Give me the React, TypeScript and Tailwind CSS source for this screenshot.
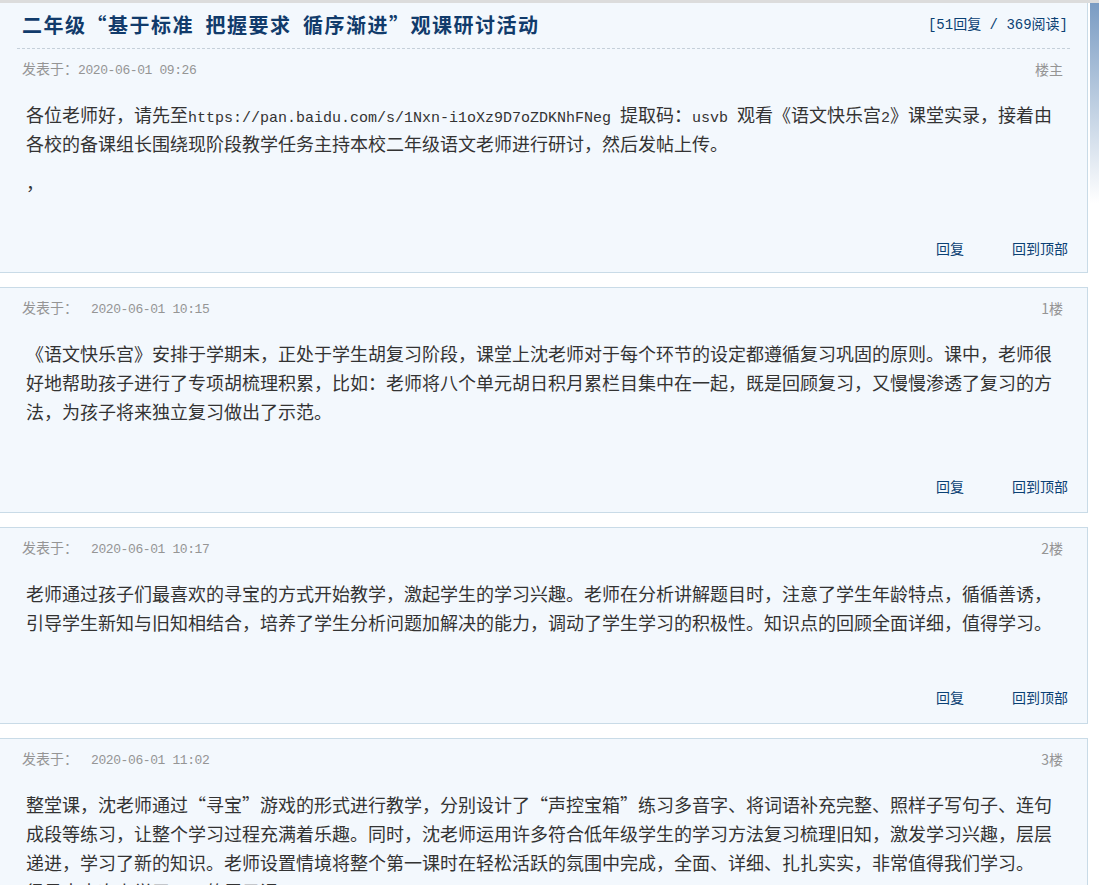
import type { ReactNode } from 'react';

const mono = "font-['Liberation_Mono',monospace] text-[15px] leading-none";

function L({ children }: { children: ReactNode }) {
  return <span className={mono}>{children}</span>;
}

function Meta({ time, floor, first }: { time: string; floor: string; first?: boolean }) {
  return (
    <div className="flex h-5 items-center justify-between pl-[22px] pr-[24px] text-[14px] leading-5 text-[#959595]">
      <span>
        发表于：
        <span className={`font-['Liberation_Mono',monospace] text-[13px] tracking-[-0.4px] ${first ? '' : 'ml-[13px]'}`}>{time}</span>
      </span>
      <span>{floor}</span>
    </div>
  );
}

function Actions({ top }: { top: string }) {
  return (
    <div className={`${top} flex h-5 items-center justify-end gap-[48px] pr-[19px] text-[14px] leading-5 text-[#0b4174]`}>
      <a className="cursor-pointer">回复</a>
      <a className="cursor-pointer">回到顶部</a>
    </div>
  );
}

function Body({ children }: { children: ReactNode }) {
  return <div className="mt-[21px] whitespace-nowrap pl-[26px] text-[18px] leading-[29px] text-[#333]">{children}</div>;
}

const posts = [
  {
    time: '2020-06-01 10:15',
    floor: '1楼',
    lines: [
      '《语文快乐宫》安排于学期末，正处于学生胡复习阶段，课堂上沈老师对于每个环节的设定都遵循复习巩固的原则。课中，老师很',
      '好地帮助孩子进行了专项胡梳理积累，比如：老师将八个单元胡日积月累栏目集中在一起，既是回顾复习，又慢慢渗透了复习的方',
      '法，为孩子将来独立复习做出了示范。',
    ],
  },
  {
    time: '2020-06-01 10:17',
    floor: '2楼',
    lines: [
      '老师通过孩子们最喜欢的寻宝的方式开始教学，激起学生的学习兴趣。老师在分析讲解题目时，注意了学生年龄特点，循循善诱，',
      '引导学生新知与旧知相结合，培养了学生分析问题加解决的能力，调动了学生学习的积极性。知识点的回顾全面详细，值得学习。',
    ],
  },
  {
    time: '2020-06-01 11:02',
    floor: '3楼',
    lines: [
      '整堂课，沈老师通过“寻宝”游戏的形式进行教学，分别设计了“声控宝箱”练习多音字、将词语补充完整、照样子写句子、连句',
      '成段等练习，让整个学习过程充满着乐趣。同时，沈老师运用许多符合低年级学生的学习方法复习梳理旧知，激发学习兴趣，层层',
      '递进，学习了新的知识。老师设置情境将整个第一课时在轻松活跃的氛围中完成，全面、详细、扎扎实实，非常值得我们学习。',
      '很显出本次上学习……的展示课。',
    ],
  },
];

export default function App() {
  return (
    <div lang="zh-CN" className="min-h-[885px] bg-white font-['Noto_Sans_CJK_SC','Liberation_Sans',sans-serif]">
      <div className="h-[3px] bg-[#dcdcdc]" />
      <div className="flex">
        <div className="w-[1088px]">
          {/* thread head + first post */}
          <div className="border-r border-b border-[#c9dbe7] bg-[#f3f8fd] pb-[14px]">
            <div className="mx-[17px] flex h-[46px] items-center justify-between border-b border-dashed border-[#c5d0da] pb-[2px] pl-[5px] pr-[2px]">
              <h1 className="text-[20px] font-bold tracking-[1.5px] text-[#113b6b]">
                二年级“基于标准{'\u2002'}把握要求{'\u2002'}循序渐进”观课研讨活动
              </h1>
              <span className="text-[14px] text-[#0b4174]">
                <span className="font-['Liberation_Mono',monospace]">[51</span>回复
                <span className="font-['Liberation_Mono',monospace]"> / 369</span>阅读
                <span className="font-['Liberation_Mono',monospace]">]</span>
              </span>
            </div>
            <div className="mt-[10px]">
              <Meta time="2020-06-01 09:26" floor="楼主" first />
            </div>
            <Body>
              <p className="mb-[10px]">
                各位老师好，请先至<L>https://pan.baidu.com/s/1Nxn-i1oXz9D7oZDKNhFNeg </L>提取码：<L>usvb </L>观看《语文快乐宫<L>2</L>》课堂实录，接着由
                <br />
                各校的备课组长围绕现阶段教学任务主持本校二年级语文老师进行研讨，然后发帖上传。
              </p>
              <p className="mb-[10px]">，</p>
            </Body>
            <Actions top="mt-[41px]" />
          </div>

          {posts.map((p) => (
            <div key={p.floor} className="mt-[14px] border-y border-r border-[#c9dbe7] bg-[#f3f8fd] pt-[10px] pb-[16px]">
              <Meta time={p.time} floor={p.floor} />
              <Body>
                <p className="mb-3">
                  {p.lines.map((line, i) => (
                    <span key={i} className="block">
                      {line}
                    </span>
                  ))}
                </p>
              </Body>
              <Actions top="mt-[50px]" />
            </div>
          ))}
        </div>
        <div className="ml-[2px] flex-1 bg-[linear-gradient(to_bottom,#7a9cc3,#ffffff_200px)]" />
      </div>
    </div>
  );
}
